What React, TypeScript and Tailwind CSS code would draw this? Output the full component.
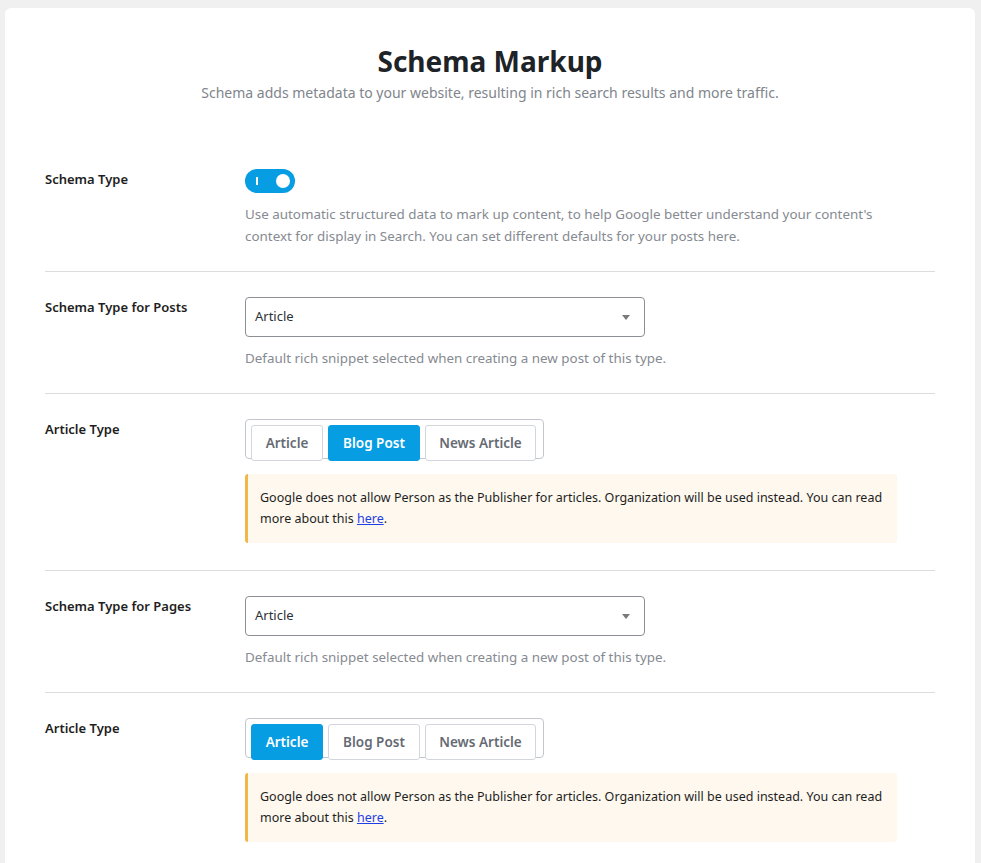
import React, { useState } from 'react';

const font = { fontFamily: '"Noto Sans", "Open Sans", sans-serif' };

const SelectBox: React.FC<{ value: string }> = ({ value }) => (
  <div className="flex h-10 w-[400px] items-center justify-between rounded-[4px] border border-[#8c8f94] bg-white pl-[9px] pr-[14px] text-[13px] text-[#2c3338]">
    <span>{value}</span>
    <span className="h-0 w-0 border-x-[4px] border-t-[5px] border-x-transparent border-t-[#7a7a7a]" />
  </div>
);

const widths: Record<string, string> = {
  Article: 'w-[72px]',
  'Blog Post': 'w-[92px]',
  'News Article': 'w-[111px]',
};

const ButtonGroup: React.FC<{ options: string[]; active: string }> = ({ options, active }) => {
  const [current, setCurrent] = useState(active);
  return (
    <div className="flex h-10 w-fit items-start gap-[5px] rounded-[4px] border border-[#c3c7cd] pl-[5px] pr-[7px] pt-[5px]">
      {options.map((o) => (
        <button
          key={o}
          onClick={() => setCurrent(o)}
          className={
            o === current
              ? `${widths[o]} h-9 rounded-[3px] border border-[#069de3] bg-[#069de3] text-[13.5px] font-semibold text-white`
              : `${widths[o]} h-9 rounded-[3px] border border-[#d3d7dc] bg-white text-[13.5px] font-semibold text-[#666b73]`
          }
        >
          {o}
        </button>
      ))}
    </div>
  );
};

const Notice: React.FC = () => (
  <div className="mt-[15px] w-[652px] rounded-[3px] border-l-[3px] border-[#f0b849] bg-[#fef8ee] py-[14px] pl-[12px] pr-[14px] text-[12.5px] leading-[20.5px] text-[#1e1e1e]">
    Google does not allow Person as the Publisher for articles. Organization will be used instead. You can read more
    about this{' '}
    <a href="#" className="text-[#1f3fe6] underline">
      here
    </a>
    .
  </div>
);

const Row: React.FC<{ label: string; children: React.ReactNode; last?: boolean; tall?: boolean }> = ({
  label,
  children,
  last,
  tall,
}) => (
  <div
    className={
      (last ? 'flex pt-[25px] ' : 'flex border-b border-[#dcdcde] pt-[25px] ') + (tall ? 'pb-[27px]' : 'pb-6')
    }
  >
    <div className="w-[200px] shrink-0 pt-[1px] text-[13px] font-semibold leading-[18px] text-[#1e1e1e]">{label}</div>
    <div className="flex-1">{children}</div>
  </div>
);

const Help: React.FC<{ children: React.ReactNode }> = ({ children }) => (
  <p className="mt-[10px] text-[13.4px] leading-[22px] text-[#868a91]">{children}</p>
);

const App: React.FC = () => {
  const [enabled, setEnabled] = useState(true);

  return (
    <div className="min-h-screen bg-[#f0f0f1] pl-[5px] pr-[6px] pt-[8px]" style={font}>
      <div className="rounded-t-[6px] bg-white px-10 pb-10 pt-[33px]">
        {/* Heading */}
        <div className="mb-[40px] text-center">
          <h1 className="text-[28px] font-bold leading-[40px] text-[#1d2327]">Schema Markup</h1>
          <p className="mt-[1px] text-[14px] leading-[22px] text-[#80858c]">
            Schema adds metadata to your website, resulting in rich search results and more traffic.
          </p>
        </div>

        {/* Schema Type */}
        <Row label="Schema Type">
          <button
            onClick={() => setEnabled(!enabled)}
            className={
              enabled
                ? 'relative flex h-6 w-[50px] items-center rounded-full bg-[#069de3]'
                : 'relative flex h-6 w-[50px] items-center rounded-full bg-[#c3c4c7]'
            }
          >
            <span className="absolute left-[11px] top-[8px] h-2 w-[2px] bg-white" />
            <span
              className={
                enabled
                  ? 'absolute right-[5px] top-[5px] h-[14px] w-[14px] rounded-full bg-white'
                  : 'absolute left-[5px] top-[5px] h-[14px] w-[14px] rounded-full bg-white'
              }
            />
          </button>
          <Help>
            Use automatic structured data to mark up content, to help Google better understand your content's
            <br />
            context for display in Search. You can set different defaults for your posts here.
          </Help>
        </Row>

        {/* Posts */}
        <Row label="Schema Type for Posts">
          <SelectBox value="Article" />
          <Help>Default rich snippet selected when creating a new post of this type.</Help>
        </Row>

        <Row label="Article Type" tall>
          <ButtonGroup options={['Article', 'Blog Post', 'News Article']} active="Blog Post" />
          <Notice />
        </Row>

        {/* Pages */}
        <Row label="Schema Type for Pages">
          <SelectBox value="Article" />
          <Help>Default rich snippet selected when creating a new post of this type.</Help>
        </Row>

        <Row label="Article Type" last tall>
          <ButtonGroup options={['Article', 'Blog Post', 'News Article']} active="Article" />
          <Notice />
        </Row>
      </div>
    </div>
  );
};

export default App;
